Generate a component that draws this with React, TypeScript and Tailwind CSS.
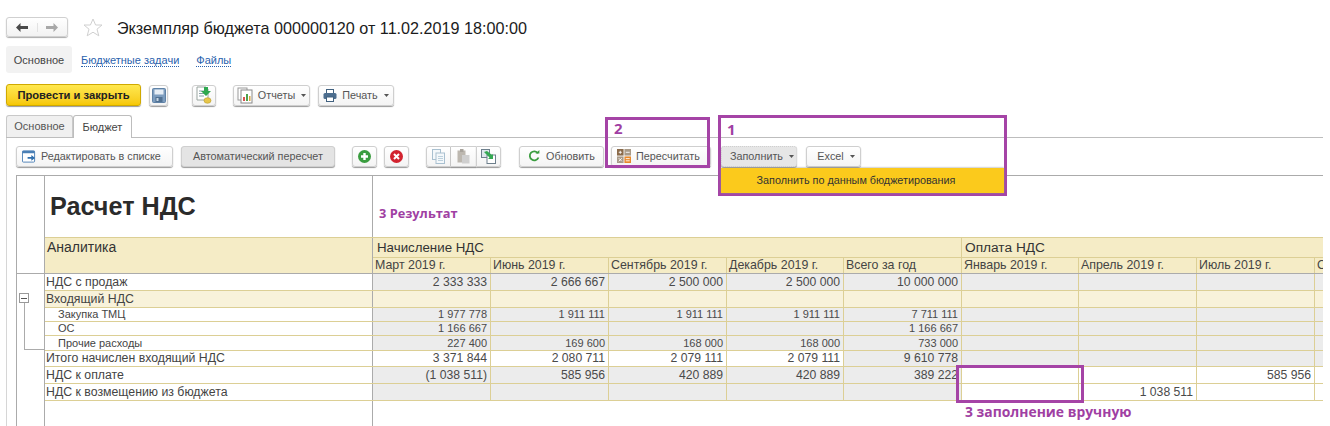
import React from "react";

const btn =
  "flex items-center justify-center rounded-[3px] border border-[#cfcfcf] bg-gradient-to-b from-white to-[#f4f4f4] shadow-[0_1px_1px_#9a9a9a] text-[10.800px] text-[#555] h-[21px] whitespace-nowrap";

const Caret = () => (
  <svg width="5" height="3" viewBox="0 0 5 3" className="ml-[6px]">
    <path d="M0 0h5L2.500 3z" fill="#555" />
  </svg>
);

const SaveIcon = () => (
  <svg width="14" height="15" viewBox="0 0 14 15">
    <rect x="0.500" y="0.500" width="13" height="14" rx="1" fill="#7d9dbf" stroke="#5f82a6" />
    <rect x="2.500" y="1.500" width="9" height="5" fill="#e6eef6" />
    <rect x="3.500" y="9" width="7" height="5" fill="#4f7092" />
    <rect x="4.500" y="10" width="2" height="3" fill="#c8d6e4" />
  </svg>
);
const PostIcon = () => (
  <svg width="17" height="18" viewBox="0 0 17 18">
    <path d="M1 1h9l2 2v11H1z" fill="#fff" stroke="#9aa5a0" />
    <path d="M3 5h6M3 7.500h6M3 10h5" stroke="#8aa0a8" />
    <path d="M8 1h4v4h3l-5 5-5-5h3z" fill="#2fa84f" />
    <ellipse cx="11.500" cy="14.500" rx="3.500" ry="2.800" fill="#e7c64a" stroke="#b99a2a" strokeWidth="0.600" />
  </svg>
);
const ReportIcon = () => (
  <svg width="16" height="17" viewBox="0 0 16 17">
    <rect x="1" y="1" width="9" height="12" fill="#fff" stroke="#9a9a9a" />
    <rect x="4" y="3" width="11" height="13" fill="#fff" stroke="#8a8a8a" />
    <rect x="6" y="10" width="2" height="4" fill="#d9534f" />
    <rect x="9" y="7" width="2" height="7" fill="#4ea24e" />
    <rect x="12" y="9" width="1.500" height="5" fill="#d9a441" />
  </svg>
);
const PrintIcon = () => (
  <svg width="14" height="13" viewBox="0 0 14 13">
    <rect x="3.500" y="0.500" width="7" height="4" fill="#fff" stroke="#41617f" />
    <rect x="0.500" y="4" width="13" height="6" rx="1.500" fill="#4c6d8e" />
    <rect x="3.500" y="8" width="7" height="4.500" fill="#fff" stroke="#41617f" />
  </svg>
);
const EditListIcon = () => (
  <svg width="14" height="13" viewBox="0 0 15 13">
    <rect x="0.500" y="0.500" width="13" height="12" rx="1" fill="#fff" stroke="#4a7fb5" />
    <rect x="0.500" y="0.500" width="13" height="2.500" fill="#4a7fb5" />
    <path d="M6 7h4V5l4 3-4 3V9H6z" fill="#2f6fae" />
  </svg>
);
const PlusIcon = () => (
  <svg width="13" height="13" viewBox="0 0 13 13">
    <circle cx="6.500" cy="6.500" r="6.500" fill="#3a9d3f" />
    <path d="M5.300 3h2.400v2.300H10v2.400H7.700V10H5.300V7.700H3V5.300h2.300z" fill="#fff" />
  </svg>
);
const CloseIcon = () => (
  <svg width="13" height="13" viewBox="0 0 13 13">
    <circle cx="6.500" cy="6.500" r="6.500" fill="#d2232f" />
    <path d="M4 4l5 5M9 4l-5 5" stroke="#fff" strokeWidth="2" />
  </svg>
);
const CopyIcon = () => (
  <svg width="13" height="15" viewBox="0 0 13 15">
    <rect x="0.500" y="0.500" width="8" height="10" fill="#f4f8fb" stroke="#a9c0d0" />
    <rect x="4" y="4" width="8.500" height="10.500" fill="#f4f8fb" stroke="#a9c0d0" />
    <path d="M6 7.500h5M6 9.500h5M6 11.500h5" stroke="#bcd0dc" />
  </svg>
);
const PasteIcon = () => (
  <svg width="13" height="15" viewBox="0 0 13 15">
    <rect x="0.500" y="1.500" width="8" height="12" fill="#bdb8b0" />
    <rect x="3" y="0" width="3.500" height="3" fill="#a8a39c" />
    <rect x="5" y="6" width="7.500" height="8.500" fill="#cfcfcf" />
  </svg>
);
const CopyMoveIcon = () => (
  <svg width="15" height="15" viewBox="0 0 15 15">
    <rect x="0.500" y="0.500" width="8" height="8" fill="#dfe8ee" stroke="#6d7f8c" />
    <rect x="6" y="6" width="8.500" height="8.500" fill="#fff" stroke="#6d7f8c" />
    <path d="M3 3l3-1 5 4 1-1v5H7l1.500-1.500z" fill="#35a853" />
  </svg>
);
const RefreshIcon = () => (
  <svg width="12" height="12" viewBox="0 0 12 12" fill="none">
    <path d="M10 3.200A4.500 4.500 0 1 0 10.500 7.500" stroke="#3a9d3f" strokeWidth="1.800" />
    <path d="M7.500 3.600h3.900V0z" fill="#3a9d3f" />
  </svg>
);
const CalcIcon = () => (
  <svg width="14" height="14" viewBox="0 0 16 16">
    <rect x="0" y="0" width="7.500" height="7.500" fill="#8a6a4a" />
    <rect x="8.500" y="0" width="7.500" height="7.500" fill="#a89a88" />
    <rect x="0" y="8.500" width="7.500" height="7.500" fill="#a89a88" />
    <rect x="8.500" y="8.500" width="7.500" height="7.500" fill="#e8882a" />
    <path d="M2 3.750h3.500M3.750 2v3.500M10 3.750h4.500M2 10.500l3.500 3.500M5.500 10.500L2 14M10 11h4.500M10 13.500h4.500" stroke="#fff" />
  </svg>
);

type Tone = "g" | "w" | "c";
const toneClass: Record<Tone, string> = {
  g: "bg-[#ececec]",
  w: "bg-white",
  c: "bg-[#f8f2da]",
};

const cell = "border border-[#dccf95] px-[3px] text-right text-[#4a4a4a] leading-none overflow-hidden whitespace-nowrap";

const rows: {
  label: string;
  h: string;
  size: string;
  indent: boolean;
  labelTone: Tone;
  cells: [string, Tone][];
}[] = [
  {
    label: "НДС с продаж", h: "h-[17px]", size: "text-[12.300px]", indent: false, labelTone: "w",
    cells: [["2 333 333", "g"], ["2 666 667", "g"], ["2 500 000", "g"], ["2 500 000", "g"], ["10 000 000", "g"], ["", "g"], ["", "g"], ["", "g"], ["", "g"]],
  },
  {
    label: "Входящий НДС", h: "h-[17px]", size: "text-[12.300px]", indent: false, labelTone: "c",
    cells: [["", "c"], ["", "c"], ["", "c"], ["", "c"], ["", "c"], ["", "c"], ["", "c"], ["", "c"], ["", "c"]],
  },
  {
    label: "Закупка ТМЦ", h: "h-[14px]", size: "text-[11px]", indent: true, labelTone: "w",
    cells: [["1 977 778", "g"], ["1 911 111", "g"], ["1 911 111", "g"], ["1 911 111", "g"], ["7 711 111", "g"], ["", "g"], ["", "g"], ["", "g"], ["", "g"]],
  },
  {
    label: "ОС", h: "h-[14px]", size: "text-[11px]", indent: true, labelTone: "w",
    cells: [["1 166 667", "g"], ["", "g"], ["", "g"], ["", "g"], ["1 166 667", "g"], ["", "g"], ["", "g"], ["", "g"], ["", "g"]],
  },
  {
    label: "Прочие расходы", h: "h-[15px]", size: "text-[11px]", indent: true, labelTone: "w",
    cells: [["227 400", "g"], ["169 600", "g"], ["168 000", "g"], ["168 000", "g"], ["733 000", "g"], ["", "g"], ["", "g"], ["", "g"], ["", "g"]],
  },
  {
    label: "Итого начислен входящий НДС", h: "h-[16px]", size: "text-[12.300px]", indent: false, labelTone: "w",
    cells: [["3 371 844", "w"], ["2 080 711", "w"], ["2 079 111", "w"], ["2 079 111", "w"], ["9 610 778", "g"], ["", "g"], ["", "g"], ["", "g"], ["", "g"]],
  },
  {
    label: "НДС к оплате", h: "h-[17px]", size: "text-[12.300px]", indent: false, labelTone: "w",
    cells: [["(1 038 511)", "g"], ["585 956", "g"], ["420 889", "g"], ["420 889", "g"], ["389 222", "g"], ["", "w"], ["", "w"], ["585 956", "w"], ["", "w"]],
  },
  {
    label: "НДС к возмещению из бюджета", h: "h-[17px]", size: "text-[12.300px]", indent: false, labelTone: "w",
    cells: [["", "g"], ["", "g"], ["", "g"], ["", "g"], ["", "g"], ["", "w"], ["1 038 511", "w"], ["", "w"], ["", "w"]],
  },
];

const months = ["Март 2019 г.", "Июнь 2019 г.", "Сентябрь 2019 г.", "Декабрь 2019 г.", "Всего за год", "Январь 2019 г.", "Апрель 2019 г.", "Июль 2019 г.", "О"];

const annot = "absolute text-[#a03fa3] font-bold leading-none whitespace-nowrap";
const frame = "absolute border-[3px] border-[#a544a6]";

export default function App() {
  return (
    <div className="relative w-[1330px] h-[426px] overflow-hidden bg-white font-['Liberation_Sans',Arial,sans-serif]">
      {/* Title row */}
      <div className="flex items-center h-[20px] mt-[17px] ml-[6px]">
        <div className="flex items-center h-[20px] w-[62px] rounded-[3px] border border-[#d0d0d0] bg-gradient-to-b from-white to-[#f2f2f2] shadow-[0_1px_1px_#aaa]">
          <div className="flex flex-1 justify-center border-r border-[#e2e2e2]">
            <svg width="12" height="9" viewBox="0 0 12 9"><path d="M0 4.500L4.500 0v3H12v3H4.500v3z" fill="#4a4a4a" /></svg>
          </div>
          <div className="flex flex-1 justify-center">
            <svg width="12" height="9" viewBox="0 0 12 9"><path d="M12 4.500L7.500 0v3H0v3h7.500v3z" fill="#a8a8a8" /></svg>
          </div>
        </div>
        <svg width="20" height="19" viewBox="0 0 20 19" className="ml-[15px]">
          <path d="M10 1l2.600 6h6.400l-5 4.200 1.800 6.600L10 14.200l-5.800 3.600L6 11.200 1 7h6.400z" fill="#fff" stroke="#d0d0d0" />
        </svg>
        <div className="ml-[14px] mt-[2px] text-[16.160px] text-[#1c1c1c] whitespace-nowrap">Экземпляр бюджета 000000120 от 11.02.2019 18:00:00</div>
      </div>

      {/* Section tabs */}
      <div className="flex items-center mt-[9px] ml-[6px] h-[27px] text-[11px]">
        <div className="flex items-center justify-center w-[66px] h-[27px] pt-px rounded-[3px] bg-[#f2f2f2] text-[#444]">Основное</div>
        <span className="ml-[9px] mt-[2px] text-[#2a62ad] border-b border-dotted border-[#2a62ad] leading-[12px]">Бюджетные задачи</span>
        <span className="ml-[17px] mt-[2px] text-[#2a62ad] border-b border-dotted border-[#2a62ad] leading-[12px]">Файлы</span>
      </div>

      {/* Command bar */}
      <div className="flex items-center mt-[11px] ml-[6px] h-[22px]">
        <div className="flex items-center justify-center w-[135px] h-[22px] rounded-[3px] border border-[#d0a900] bg-gradient-to-b from-[#ffe84d] to-[#f6c800] shadow-[0_1px_1px_#9a9a9a] text-[11.200px] font-bold text-[#222]">Провести и закрыть</div>
        <div className={`${btn} w-[19px] ml-[8px]`}><SaveIcon /></div>
        <div className={`${btn} w-[24px] ml-[24px]`}><PostIcon /></div>
        <div className={`${btn} w-[77px] ml-[17px]`}><ReportIcon /><span className="ml-[5px]">Отчеты</span><Caret /></div>
        <div className={`${btn} w-[76px] ml-[8px]`}><PrintIcon /><span className="ml-[5px]">Печать</span><Caret /></div>
      </div>

      {/* Page tabs */}
      <div className="flex items-end mt-[9px] ml-[6px] h-[23px] w-[1317px] border-b border-[#bdbdbd]">
        <div className="flex items-center justify-center w-[67px] h-[22px] border border-b-0 border-[#c9c9c9] bg-[#f0f0f0] rounded-t-[3px] text-[11px] text-[#555]">Основное</div>
        <div className="flex items-center justify-center w-[59px] h-[23px] -mb-px border border-b-0 border-[#bdbdbd] bg-white rounded-t-[3px] text-[11px] text-[#444]">Бюджет</div>
      </div>

      {/* Sheet panel */}
      <div className="ml-[6px] w-[1317px] border-l border-[#d6d6d6] pl-[9px] pt-[7px]">
        <div className="flex items-center h-[22px]">
          <div className={`${btn} !justify-start pl-[5px] w-[157px]`}><EditListIcon /><span className="ml-[5px]">Редактировать в списке</span></div>
          <div className={`${btn} w-[154px] ml-[8px] !bg-none bg-[#e4e4e4] border-[#c4c4c4]`}>Автоматический пересчет</div>
          <div className={`${btn} w-[25px] ml-[17px]`}><PlusIcon /></div>
          <div className={`${btn} w-[25px] ml-[7px]`}><CloseIcon /></div>
          <div className="flex ml-[17px]">
            <div className={`${btn} w-[25px] rounded-r-none`}><CopyIcon /></div>
            <div className={`${btn} w-[25px] rounded-none border-x-0`}><PasteIcon /></div>
            <div className={`${btn} w-[25px] rounded-l-none`}><CopyMoveIcon /></div>
          </div>
          <div className={`${btn} w-[85px] ml-[18px]`}><RefreshIcon /><span className="ml-[6px]">Обновить</span></div>
          <div className={`${btn} !justify-start pl-[5px] w-[100px] ml-[7px]`}><CalcIcon /><span className="ml-[5px]">Пересчитать</span></div>
          <div className={`${btn} w-[76px] ml-[10px] pl-[6px] !border-dotted border-[#666] !bg-none bg-[#e6e6e6]`}>Заполнить<Caret /></div>
          <div className={`${btn} w-[55px] ml-[9px] pl-[5px]`}>Excel<Caret /></div>
        </div>

        {/* Spreadsheet */}
        <div className="relative mt-[8px] w-[1307px] overflow-hidden">
          <table className="table-fixed border-collapse w-[1307px]">
            <colgroup>
              <col className="w-[28px]" />
              <col className="w-[328px]" />
              <col className="w-[118px]" />
              <col className="w-[118px]" />
              <col className="w-[118px]" />
              <col className="w-[117px]" />
              <col className="w-[118px]" />
              <col className="w-[117px]" />
              <col className="w-[118px]" />
              <col className="w-[118px]" />
              <col className="w-[9px]" />
            </colgroup>
            <tbody>
              <tr className="h-[62px]">
                <td rowSpan={3} className="border border-[#ababab]" />
                <td className="border border-[#ababab] border-b-[#dccf95] pl-[5px] text-[25.200px] font-bold text-[#2b2b2b] leading-none">Расчет НДС</td>
                <td colSpan={9} className="border-t border-[#ababab]" />
              </tr>
              <tr className="h-[20px]">
                <td rowSpan={2} className="border-x border-[#ababab] border-b-[#ababab] border-b bg-[#f5ecc6] pl-[2px] pt-px align-top text-[14px] text-[#333] leading-[16px]">Аналитика</td>
                <td colSpan={5} className="border border-[#dccf95] border-l-[#ababab] bg-[#f5ecc6] pl-[4px] text-[13.300px] text-[#333] leading-none">Начисление НДС</td>
                <td colSpan={4} className="border border-[#dccf95] bg-[#f5ecc6] pl-[3px] text-[13.700px] text-[#333] leading-none">Оплата НДС</td>
              </tr>
              <tr className="h-[16px]">
                {months.map((m) => (
                  <td key={m} className="border border-[#dccf95] border-b-[#ababab] bg-[#f5ecc6] pl-[2px] text-[12.400px] text-[#444] leading-none overflow-hidden whitespace-nowrap">{m}</td>
                ))}
              </tr>
              {rows.map((r) => (
                <tr key={r.label} className={r.h}>
                  <td className="border-x border-[#ababab]" />
                  <td className={`border-y border-[#dccf95] border-r border-r-[#ababab] ${toneClass[r.labelTone]} ${r.indent ? "pl-[13px]" : "pl-px"} ${r.size} text-[#444] leading-none whitespace-nowrap`}>{r.label}</td>
                  {r.cells.map(([v, t], i) => (
                    <td key={i} className={`${cell} ${r.size === "text-[11px]" ? "text-[11px]" : "text-[12.200px]"} ${toneClass[t]} ${i === 0 ? "border-l-[#ababab]" : ""}`}>{v}</td>
                  ))}
                </tr>
              ))}
              <tr className="h-[26px]">
                <td className="border-x border-[#ababab]" />
                <td className="border-x border-[#ababab]" />
                <td colSpan={9} />
              </tr>
            </tbody>
          </table>
          {/* Tree connector */}
          <div className="absolute left-[3px] top-[118px] w-[10px] h-[10px] border border-[#999] bg-white flex items-center justify-center">
            <div className="w-[6px] h-px bg-[#555]" />
          </div>
          <div className="absolute left-[8px] top-[128px] w-[20px] h-[47px] border-l border-b border-[#ababab]" />
        </div>
      </div>

      {/* Callouts */}
      <div className={`${frame} left-[605px] top-[117px] w-[105px] h-[51px]`} />
      <div className={`${frame} left-[718px] top-[115px] w-[289px] h-[81px]`} />
      <div className={`${annot} left-[614px] top-[121px] text-[15px] font-['Open_Sans',sans-serif]`}>2</div>
      <div className={`${annot} left-[727px] top-[122px] text-[15px] font-['Open_Sans',sans-serif]`}>1</div>
      <div className="absolute left-[721px] top-[168px] w-[283px] h-[25px] flex items-center justify-center pr-[13px] bg-[#fbca1c] text-[10.800px] text-[#333] shadow-[0_0_2px_#888]">Заполнить по данным бюджетирования</div>
      <div className={`${annot} left-[379px] top-[207px] text-[12.800px] font-['Open_Sans',sans-serif]`}>3 Результат</div>
      <div className={`${frame} left-[956px] top-[365px] w-[128px] h-[38px]`} />
      <div className={`${annot} left-[965px] top-[405px] text-[13.900px] font-['Open_Sans',sans-serif]`}>3 заполнение вручную</div>
    </div>
  );
}
